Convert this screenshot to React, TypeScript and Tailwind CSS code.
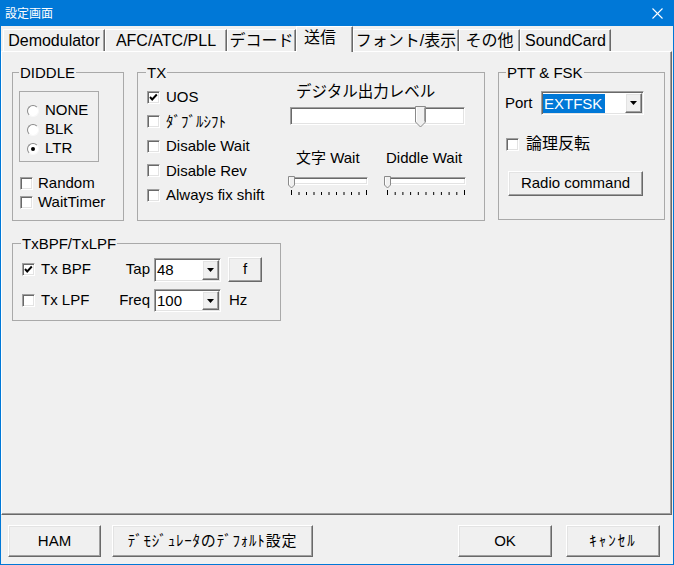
import React from "react";

const sunken =
  "border border-t-[#a0a0a0] border-l-[#a0a0a0] border-b-white border-r-white shadow-[inset_1px_1px_0_#696969,inset_-1px_-1px_0_#e3e3e3]";
const raised =
  "border border-t-white border-l-white border-b-[#696969] border-r-[#696969] shadow-[inset_-1px_-1px_0_#a0a0a0,inset_1px_1px_0_#e3e3e3]";

function Check({ checked = false }: { checked?: boolean }) {
  return (
    <span className={`relative block w-[13px] h-[13px] shrink-0 bg-white ${sunken}`}>
      {checked && (
        <svg className="absolute left-0 top-0" width="11" height="11" viewBox="0 0 11 11">
          <polyline points="2,5 4.2,7.5 8.8,2.5" fill="none" stroke="#000" strokeWidth="1.9" />
        </svg>
      )}
    </span>
  );
}

function Radio({ checked = false }: { checked?: boolean }) {
  return (
    <span className="relative block w-[12px] h-[12px] shrink-0 rounded-full bg-white border border-t-[#8a8a8a] border-l-[#8a8a8a] border-r-[#f8f8f8] border-b-[#f8f8f8]">
      {checked && <span className="absolute left-[3px] top-[3px] w-[4px] h-[4px] rounded-full bg-black" />}
    </span>
  );
}

function Group({ label, labelLeft, className, children }: { label: string; labelLeft: string; className: string; children: React.ReactNode }) {
  return (
    <div className={`relative border border-[#a9a9a9] shrink-0 ${className}`}>
      <span className={`absolute -top-[9px] ${labelLeft} px-[1px] bg-[#f0f0f0] leading-[18px] text-[15px]`}>{label}</span>
      {children}
    </div>
  );
}

function Combo({ text, width, height, selected = false }: { text: string; width: string; height: string; selected?: boolean }) {
  return (
    <div className={`flex items-stretch bg-white shrink-0 ${sunken} ${width} ${height}`}>
      <div className="flex flex-1 items-center pl-[1px] pt-[1px] pb-[1px]">
        {selected ? (
          <span className="bg-[#0078d7] text-white pl-[1px] pr-[3px] leading-[19px]">{text}</span>
        ) : (
          <span className="pl-[1px] leading-[19px]">{text}</span>
        )}
      </div>
      <div className={`my-[1px] mr-[1px] w-[17px] flex items-center justify-center bg-[#f0f0f0] ${raised}`}>
        <svg width="7" height="4" viewBox="0 0 7 4">
          <polygon points="0,0 7,0 3.5,4" fill="#000" />
        </svg>
      </div>
    </div>
  );
}

function Button({ children, className }: { children: React.ReactNode; className: string }) {
  return (
    <div className={`flex items-center justify-center bg-[#f0f0f0] shrink-0 ${raised} ${className}`}>{children}</div>
  );
}

function Ticks({ width }: { width: number }) {
  const xs = Array.from({ length: 11 }, (_, i) => 1.5 + (i * (width - 3)) / 10);
  return (
    <svg width={width} height="6" viewBox={`0 0 ${width} 6`} className="block">
      {xs.map((x, i) => (
        <line key={i} x1={x} x2={x} y1={i === 0 || i === 10 ? 0 : 2} y2="5" stroke="#000" strokeWidth="1" />
      ))}
    </svg>
  );
}

function SmallSlider({ width }: { width: number }) {
  return (
    <div>
      <div className={`relative h-[8px] bg-white ${sunken}`} style={{ width }}>
        <svg className="absolute -left-[3px] -top-[2px]" width="8" height="13" viewBox="0 0 8 13">
          <polygon points="0.5,0.5 6.5,0.5 6.5,9 3.5,12 0.5,9" fill="#f0f0f0" stroke="#8a8a8a" />
          <line x1="1.5" y1="1.5" x2="1.5" y2="8.5" stroke="#fff" />
        </svg>
      </div>
      <div className="mt-[5px]">
        <Ticks width={width} />
      </div>
    </div>
  );
}

const tabs = [
  { label: "Demodulator", w: "w-[102px]" },
  { label: "AFC/ATC/PLL", w: "w-[122px]" },
  { label: "デコード", w: "w-[69px]" },
  { label: "送信", w: "w-[57px]", active: true },
  { label: "フォント/表示", w: "w-[106px]" },
  { label: "その他", w: "w-[61px]" },
  { label: "SoundCard", w: "w-[91px]" },
];

export default function App() {
  return (
    <div className="w-[674px] h-[565px] flex flex-col bg-[#f0f0f0] border-x border-b border-[#0078d7] text-black font-['Liberation_Sans','Noto_Sans_CJK_JP',sans-serif] text-[15px] select-none overflow-hidden">
      {/* title bar */}
      <div className="h-[26px] shrink-0 bg-[#0078d7] flex items-center justify-between pl-[4px] pr-[10px]">
        <span className="text-white text-[12px] font-['Noto_Sans_CJK_JP',sans-serif]">設定画面</span>
        <svg width="11" height="11" viewBox="0 0 11 11">
          <line x1="0.5" y1="0.5" x2="10.5" y2="10.5" stroke="#fff" strokeWidth="1.1" />
          <line x1="10.5" y1="0.5" x2="0.5" y2="10.5" stroke="#fff" strokeWidth="1.1" />
        </svg>
      </div>

      {/* tabs */}
      <div className="h-[25px] shrink-0 flex items-end pl-[2px]">
        {tabs.map((t) =>
          t.active ? (
            <div
              key={t.label}
              className={`relative z-10 -mb-px h-[26px] flex items-center pl-[7px] pb-[3px] bg-[#f0f0f0] border-t border-l border-white border-r border-r-[#696969] shadow-[inset_-1px_0_0_#a0a0a0] text-[16px] ${t.w}`}
            >
              {t.label}
            </div>
          ) : (
            <div
              key={t.label}
              className={`h-[22px] flex items-center justify-center border-t border-l border-white border-r border-r-[#696969] shadow-[inset_-1px_0_0_#a0a0a0] text-[16px] ${t.w}`}
            >
              {t.label}
            </div>
          )
        )}
      </div>

      {/* tab page */}
      <div className="h-[464px] w-[671px] shrink-0 border-t border-l border-white border-r border-b border-r-[#696969] border-b-[#696969] shadow-[inset_-1px_-1px_0_#a0a0a0] pt-[20px] pl-[10px]">
        <div className="flex gap-[13px]">
          {/* DIDDLE */}
          <Group label="DIDDLE" labelLeft="left-[6px]" className="w-[112px] h-[149px]">
            <div className="ml-[6px] mt-[18px] w-[80px] h-[71px] border border-[#a9a9a9] pt-[9px]">
              {["NONE", "BLK", "LTR"].map((r) => (
                <div key={r} className="h-[19px] flex items-center gap-[6px] pl-[7px]">
                  <Radio checked={r === "LTR"} />
                  <span>{r}</span>
                </div>
              ))}
            </div>
            <div className="mt-[12px]">
              {["Random", "WaitTimer"].map((c) => (
                <div key={c} className="h-[19px] flex items-center gap-[5px] pl-[7px]">
                  <Check />
                  <span>{c}</span>
                </div>
              ))}
            </div>
          </Group>

          {/* TX */}
          <Group label="TX" labelLeft="left-[8px]" className="w-[348px] h-[149px]">
            <div className="flex">
              <div className="w-[152px] pl-[9px] pt-[12px]">
                {[
                  { t: "UOS", c: true },
                  { t: "ﾀﾞﾌﾞﾙｼﾌﾄ" },
                  { t: "Disable Wait" },
                  { t: "Disable Rev" },
                  { t: "Always fix shift" },
                ].map((row) => (
                  <div key={row.t} className="h-[24.5px] flex items-center gap-[6px]">
                    <Check checked={row.c} />
                    <span className="whitespace-nowrap">{row.t}</span>
                  </div>
                ))}
              </div>
              <div className="flex-1">
                <div className="mt-[9px] pl-[6px] h-[20px] flex items-center text-[15.5px]">デジタル出力レベル</div>
                <div className={`relative mt-[5px] w-[175px] h-[18px] bg-white ${sunken}`}>
                  <svg className="absolute left-[124px] -top-[2px]" width="11" height="22" viewBox="0 0 11 22">
                    <polygon points="0.5,0.5 10.5,0.5 10.5,16 5.5,21 0.5,16" fill="#f0f0f0" stroke="#8a8a8a" />
                    <line x1="1.5" y1="1.5" x2="1.5" y2="15.5" stroke="#fff" />
                    <line x1="9.5" y1="1.5" x2="9.5" y2="15.5" stroke="#a0a0a0" />
                  </svg>
                </div>
                <div className="mt-[25px] flex">
                  <div className="w-[96px]">
                    <div className="h-[20px] -mt-[2px] flex items-center pl-[6px] whitespace-nowrap">文字 Wait</div>
                    <div className="mt-[9px]">
                      <SmallSlider width={78} />
                    </div>
                  </div>
                  <div className="w-[81px]">
                    <div className="h-[20px] -mt-[2px] flex items-center whitespace-nowrap">Diddle Wait</div>
                    <div className="mt-[9px]">
                      <SmallSlider width={80} />
                    </div>
                  </div>
                </div>
              </div>
            </div>
          </Group>

          {/* PTT & FSK */}
          <Group label="PTT & FSK" labelLeft="left-[7px]" className="w-[167px] h-[148px]">
            <div className="mt-[18px] flex items-center pl-[6px]">
              <span className="w-[36px]">Port</span>
              <Combo text="EXTFSK" width="w-[103px]" height="h-[24px]" selected />
            </div>
            <div className="mt-[19px] h-[20px] flex items-center gap-[7px] pl-[7px]">
              <Check />
              <span className="text-[16px]">論理反転</span>
            </div>
            <Button className="mt-[17px] ml-[9px] w-[135px] h-[25px]">Radio command</Button>
          </Group>
        </div>

        {/* TxBPF/TxLPF */}
        <Group label="TxBPF/TxLPF" labelLeft="left-[8px]" className="mt-[22px] w-[269px] h-[78px]">
          <div className="mt-[13px] flex items-center pl-[9px] h-[25px]">
            <div className="w-[82px] flex items-center gap-[6px]">
              <Check checked />
              <span>Tx BPF</span>
            </div>
            <span className="w-[50px] text-right pr-[4px]">Tap</span>
            <Combo text="48" width="w-[67px]" height="h-[24px]" />
            <Button className="ml-[7px] w-[34px] h-[25px]">f</Button>
          </div>
          <div className="mt-[7px] flex items-center pl-[9px] h-[23px]">
            <div className="w-[82px] flex items-center gap-[6px]">
              <Check />
              <span>Tx LPF</span>
            </div>
            <span className="w-[50px] text-right pr-[4px]">Freq</span>
            <Combo text="100" width="w-[67px]" height="h-[23px]" />
            <span className="ml-[8px]">Hz</span>
          </div>
        </Group>
      </div>

      {/* bottom buttons */}
      <div className="flex-1 flex items-start pt-[10px] pl-[7px] pr-[13px]">
        <Button className="w-[93px] h-[32px]">HAM</Button>
        <Button className="ml-[11px] w-[201px] h-[32px] tracking-[0.8px]">ﾃﾞﾓｼﾞｭﾚｰﾀのﾃﾞﾌｫﾙﾄ設定</Button>
        <div className="flex-1" />
        <Button className="w-[94px] h-[32px]">OK</Button>
        <Button className="ml-[14px] w-[94px] h-[32px] tracking-[2px]">ｷｬﾝｾﾙ</Button>
      </div>
    </div>
  );
}
